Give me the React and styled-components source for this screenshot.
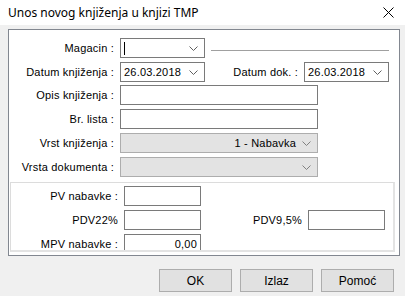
import React from "react";
import styled, { createGlobalStyle } from "styled-components";

const Global = createGlobalStyle`
  html, body { margin: 0; padding: 0; background: #f0f0f0; }
  * { box-sizing: border-box; }
`;

const Window = styled.div`
  width: 405px;
  height: 296px;
  overflow: hidden;
  background: #f0f0f0;
  font-family: "Liberation Sans", Arial, sans-serif;
  font-size: 11px;
  letter-spacing: 0.2px;
  color: #000;
`;

const TitleBar = styled.div`
  height: 25px;
  background: #fff;
  display: flex;
  align-items: center;
  justify-content: space-between;
  padding: 0 11px 1px 8px;
`;

const Title = styled.div`
  font-family: "Noto Sans", "Liberation Sans", sans-serif;
  font-size: 12px;
  letter-spacing: 0;
  color: #000;
`;

const Body = styled.div`
  padding: 4px 5px 0 8px;
`;

const Panel = styled.div`
  width: 392px;
  height: 227px;
  border: 1px solid #828790;
  background: #fff;
  padding: 8px 0 0 0;
  display: flex;
  flex-direction: column;
`;

const Row = styled.div`
  display: flex;
  align-items: center;
  height: 20px;
  gap: 6px;
  margin-top: ${(p) => p.$mt ?? 0}px;
  padding-right: ${(p) => p.$pr ?? 0}px;
`;

const Label = styled.div`
  width: ${(p) => p.$w ?? 105}px;
  flex: ${(p) => (p.$grow ? 1 : "none")};
  text-align: right;
  white-space: nowrap;
`;

const Combo = styled.div`
  width: ${(p) => p.$w}px;
  height: 20px;
  border: 1px solid ${(p) => (p.$disabled ? "#adadad" : "#7a7a7a")};
  background: ${(p) => (p.$disabled ? "#e3e3e3" : "#fff")};
  display: flex;
  align-items: center;
  padding: 0 6px 0 3px;
  gap: 6px;
`;

const ComboText = styled.div`
  flex: 1;
  text-align: ${(p) => (p.$right ? "right" : "left")};
  white-space: nowrap;
`;

const Caret = styled.div`
  width: 1px;
  height: 13px;
  background: #000;
`;

const Sep = styled.div`
  flex: 1;
  height: 1px;
  background: #a0a0a0;
  margin-top: 5px;
`;

const TextBox = styled.div`
  width: ${(p) => p.$w}px;
  height: 20px;
  border: 1px solid #7a7a7a;
  background: #fff;
  text-align: right;
  padding: 3px 3px 0 0;
  flex: none;
`;

const Inner = styled.div`
  margin: 5px 4px 0 1px;
  height: 70px;
  border-top: 1px solid #dcdcdc;
  border-left: 1px solid #dcdcdc;
  border-right: 2px solid #e3e3e3;
  border-bottom: 2px solid #e3e3e3;
  overflow: hidden;
  padding: 3px 8px 0 0;
  display: flex;
  flex-direction: column;
  gap: 4px;
`;

const Buttons = styled.div`
  display: flex;
  justify-content: flex-end;
  gap: 8px;
  margin-top: 13px;
  padding-right: 6px;
`;

const Button = styled.div`
  width: 73px;
  height: 23px;
  border: 1px solid #adadad;
  background: #e1e1e1;
  display: flex;
  align-items: center;
  justify-content: center;
  font-size: 12px;
  letter-spacing: 0;
`;

const Chevron = ({ color = "#606060" }) => (
  <svg width="9" height="5" viewBox="0 0 9 5" style={{ flex: "none" }}>
    <path d="M0.5 0.5 L4.5 4.5 L8.5 0.5" fill="none" stroke={color} strokeWidth="1" />
  </svg>
);

const CloseIcon = () => (
  <svg width="11" height="11" viewBox="0 0 11 11">
    <path d="M0.5 0.5 L10.5 10.5 M10.5 0.5 L0.5 10.5" stroke="#000" strokeWidth="1" fill="none" />
  </svg>
);

export default function App() {
  return (
    <Window>
      <Global />
      <TitleBar>
        <Title>Unos novog knjiženja u knjizi TMP</Title>
        <CloseIcon />
      </TitleBar>
      <Body>
        <Panel>
          <Row $pr={10}>
            <Label>Magacin :</Label>
            <Combo $w={85}>
              <ComboText>
                <Caret />
              </ComboText>
              <Chevron />
            </Combo>
            <Sep />
          </Row>
          <Row $mt={4} $pr={10}>
            <Label>Datum knjiženja :</Label>
            <Combo $w={85}>
              <ComboText>26.03.2018</ComboText>
              <Chevron />
            </Combo>
            <Label $grow>Datum dok. :</Label>
            <Combo $w={85}>
              <ComboText>26.03.2018</ComboText>
              <Chevron />
            </Combo>
          </Row>
          <Row $mt={3}>
            <Label>Opis knjiženja :</Label>
            <TextBox $w={198} />
          </Row>
          <Row $mt={4}>
            <Label>Br. lista :</Label>
            <TextBox $w={198} />
          </Row>
          <Row $mt={4}>
            <Label>Vrst knjiženja :</Label>
            <Combo $w={198} $disabled>
              <ComboText $right>1 - Nabavka</ComboText>
              <Chevron color="#808080" />
            </Combo>
          </Row>
          <Row $mt={4}>
            <Label>Vrsta dokumenta :</Label>
            <Combo $w={198} $disabled>
              <ComboText />
              <Chevron color="#808080" />
            </Combo>
          </Row>
          <Inner>
            <Row>
              <Label $w={107}>PV nabavke :</Label>
              <TextBox $w={77} />
            </Row>
            <Row>
              <Label $w={107}>PDV22%</Label>
              <TextBox $w={77} />
              <Label $grow>PDV9,5%</Label>
              <TextBox $w={77} />
            </Row>
            <Row>
              <Label $w={107}>MPV nabavke :</Label>
              <TextBox $w={77}>0,00</TextBox>
            </Row>
          </Inner>
        </Panel>
        <Buttons>
          <Button>OK</Button>
          <Button>Izlaz</Button>
          <Button>Pomoć</Button>
        </Buttons>
      </Body>
    </Window>
  );
}
